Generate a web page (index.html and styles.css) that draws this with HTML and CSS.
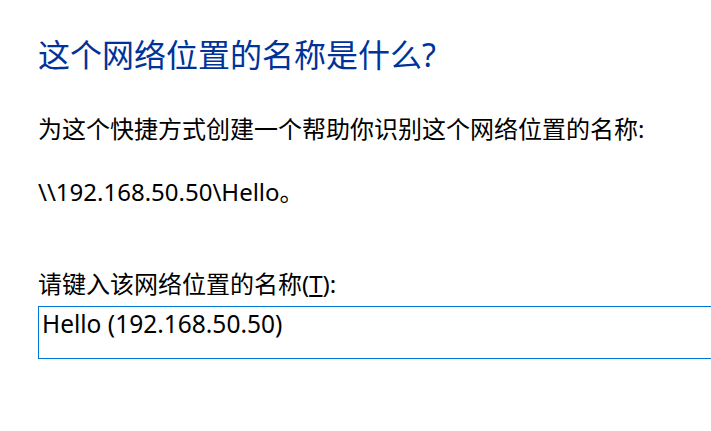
FILE: index.html
```html
<!DOCTYPE html>
<html lang="zh-CN">
<head>
<meta charset="utf-8">
<title>这个网络位置的名称是什么?</title>
<link rel="stylesheet" href="styles.css">
</head>
<body>
<div class="page">
  <h1 class="title">这个网络位置的名称是什么?</h1>
  <p class="intro">为这个快捷方式创建一个帮助你识别这个网络位置的名称:</p>
  <p class="path">\\192.168.50.50\Hello。</p>
  <label class="label" for="name">请键入该网络位置的名称(<u>T</u>):</label>
  <div class="field">
    <input id="name" class="input" type="text" value="Hello (192.168.50.50)">
  </div>
</div>
</body>
</html>
```

FILE: styles.css
```css
html, body {
  margin: 0;
  padding: 0;
  background: #ffffff;
  overflow: hidden;
}

.page {
  width: 711px;
  height: 431px;
  padding: 35px 0 0 38px;
  box-sizing: border-box;
  font-family: "Noto Sans", "Noto Sans CJK SC", sans-serif;
  color: #000000;
}

.title {
  margin: 0;
  font-weight: normal;
  font-size: 32px;
  line-height: 40px;
  color: #003399;
}

.intro {
  margin: 38px 0 0;
  font-size: 24px;
  line-height: 32px;
}

.path {
  margin: 31px 0 0;
  font-size: 24px;
  line-height: 32px;
}

.label {
  display: block;
  margin-top: 60px;
  font-size: 24px;
  line-height: 32px;
}

.field {
  margin-top: 6px;
  width: 720px;
}

.input {
  display: block;
  width: 100%;
  height: 53px;
  box-sizing: border-box;
  margin: 0;
  border: 1px solid #0078d7;
  outline: none;
  padding: 0 0 19px 3px;
  font-family: "Noto Sans", "Noto Sans CJK SC", sans-serif;
  font-size: 24.5px;
  line-height: 32px;
  color: #000000;
  background: #ffffff;
}
```
